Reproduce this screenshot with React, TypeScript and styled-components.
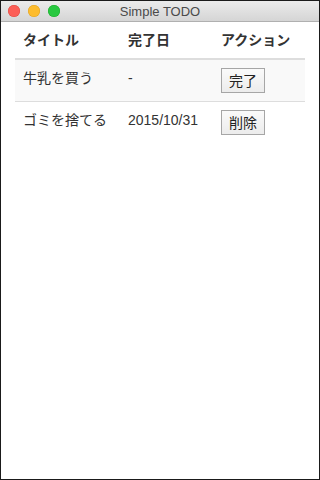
import styled, { createGlobalStyle } from "styled-components";

const GlobalStyle = createGlobalStyle`
  html, body {
    margin: 0;
    padding: 0;
    background: #ffffff;
  }
  body {
    font-family: "Liberation Sans", Arial, "Noto Sans CJK JP", sans-serif;
    font-size: 14px;
    color: #333333;
  }
`;

const Window = styled.div`
  width: 320px;
  height: 480px;
  box-sizing: border-box;
  border: 1px solid #1a1a1a;
  display: flex;
  flex-direction: column;
  background: #ffffff;
`;

const TitleBar = styled.div`
  height: 20px;
  flex: none;
  display: flex;
  align-items: center;
  position: relative;
  background: linear-gradient(#ebebeb, #d5d5d5);
  border-bottom: 1px solid #b0b0b0;
`;

const Lights = styled.div`
  display: flex;
  gap: 8px;
  padding-left: 7px;
`;

const Light = styled.span<{ color: string; edge: string }>`
  width: 12px;
  height: 12px;
  border-radius: 50%;
  background: ${(p) => p.color};
  box-shadow: inset 0 0 0 0.5px ${(p) => p.edge};
`;

const WindowTitle = styled.div`
  position: absolute;
  left: 0;
  right: 0;
  text-align: center;
  font-family: "Liberation Sans", Arial, sans-serif;
  font-size: 13px;
  color: #4a4a4a;
  pointer-events: none;
`;

const Content = styled.div`
  padding: 0 14px;
`;

const Table = styled.table`
  width: 100%;
  table-layout: fixed;
  border-collapse: collapse;
  border-spacing: 0;
`;

const Th = styled.th<{ w: number }>`
  width: ${(p) => p.w}px;
  box-sizing: border-box;
  text-align: left;
  font-weight: bold;
  padding: 8px;
  line-height: 20px;
  border-bottom: 2px solid #dddddd;
  color: #333333;
  white-space: nowrap;
`;

const Row = styled.tr<{ striped?: boolean }>`
  background: ${(p) => (p.striped ? "#f9f9f9" : "transparent")};
`;

const Td = styled.td`
  padding: 8px;
  line-height: 20px;
  vertical-align: top;
  color: #333333;
  white-space: nowrap;
  border-top: 1px solid #dddddd;
`;

const Btn = styled.button`
  display: block;
  font-family: "Liberation Sans", Arial, "Noto Sans CJK JP", sans-serif;
  font-size: 14px;
  height: 25px;
  padding: 0 7px;
  margin: 0;
  color: #222222;
  background: linear-gradient(#fafafa, #ececec);
  border: 1px solid #a6a6a6;
  border-radius: 0;
  line-height: 20px;
`;

interface Todo {
  title: string;
  done: string;
  action: string;
}

const todos: Todo[] = [
  { title: "牛乳を買う", done: "-", action: "完了" },
  { title: "ゴミを捨てる", done: "2015/10/31", action: "削除" },
];

const App = () => {
  return (
    <>
      <GlobalStyle />
      <Window>
        <TitleBar>
          <Lights>
            <Light color="#fc5f57" edge="#de4a42" />
            <Light color="#fdbc2e" edge="#dea123" />
            <Light color="#28c840" edge="#1aab29" />
          </Lights>
          <WindowTitle>Simple TODO</WindowTitle>
        </TitleBar>
        <Content>
          <Table>
            <thead>
              <tr>
                <Th w={105}>タイトル</Th>
                <Th w={93}>完了日</Th>
                <Th w={92}>アクション</Th>
              </tr>
            </thead>
            <tbody>
              {todos.map((t, i) => (
                <Row key={t.title} striped={i % 2 === 0}>
                  <Td>{t.title}</Td>
                  <Td>{t.done}</Td>
                  <Td>
                    <Btn>{t.action}</Btn>
                  </Td>
                </Row>
              ))}
            </tbody>
          </Table>
        </Content>
      </Window>
    </>
  );
};

export default App;
